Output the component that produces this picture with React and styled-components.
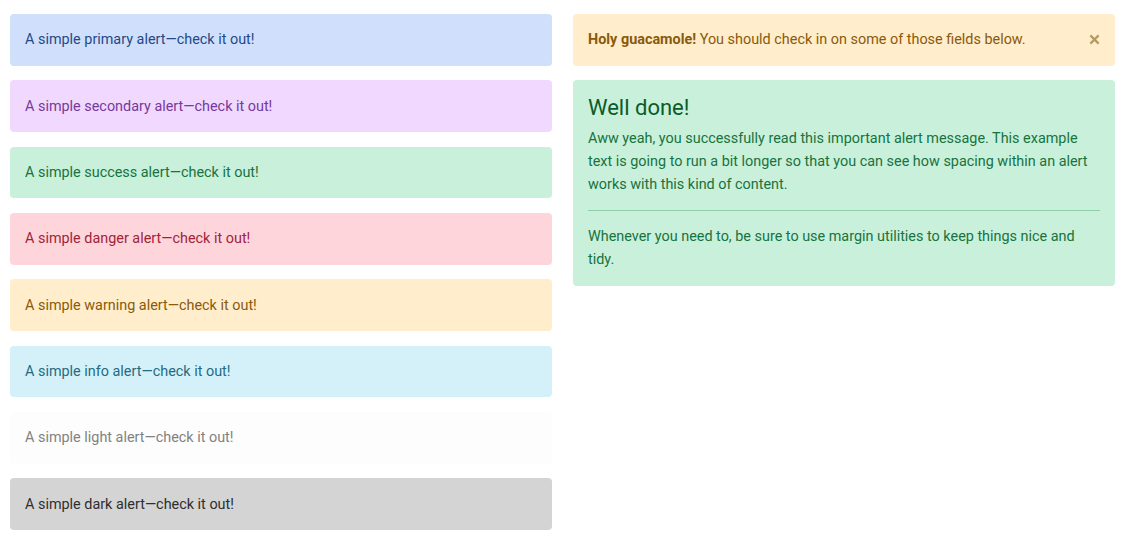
import React from "react";
import styled, { createGlobalStyle } from "styled-components";

const GlobalStyle = createGlobalStyle`
  * { box-sizing: border-box; }
  body {
    margin: 0;
    background: #ffffff;
    font-family: Roboto, "Liberation Sans", sans-serif;
    font-size: 14.4px;
    line-height: 1.6;
  }
`;

const variants = {
  primary: { bg: "#d0e0fc", fg: "#244989" },
  secondary: { bg: "#f0d8ff", fg: "#763a9a" },
  success: { bg: "#c9f0da", fg: "#17733f", hr: "#8fcfa7" },
  danger: { bg: "#ffd5dc", fg: "#a02438" },
  warning: { bg: "#ffedcb", fg: "#8a5a0c" },
  info: { bg: "#d4f1fa", fg: "#236b82" },
  light: { bg: "#fdfdfd", fg: "#828282" },
  dark: { bg: "#d4d4d4", fg: "#2e2e2e" },
};

const Page = styled.div`
  display: grid;
  grid-template-columns: 542px 542px;
  column-gap: 21px;
  padding: 14px 10px;
  align-items: start;
`;

const Column = styled.div`
  display: flex;
  flex-direction: column;
  gap: 14.7px;
`;

const Alert = styled.div`
  position: relative;
  padding: 14.3px 15px;
  padding-right: ${(p) => (p.$dismissible ? "48px" : "15px")};
  border-radius: 4px;
  background: ${(p) => variants[p.$variant].bg};
  color: ${(p) => variants[p.$variant].fg};
`;

const Strong = styled.strong`
  font-weight: 700;
`;

const CloseButton = styled.button`
  position: absolute;
  top: 50%;
  right: 13px;
  transform: translateY(-50%);
  width: 16px;
  height: 16px;
  padding: 0;
  border: 0;
  background: transparent;
  display: flex;
  align-items: center;
  justify-content: center;
  opacity: 0.5;
  cursor: pointer;
`;

const Heading = styled.h4`
  margin: 0 0 6px;
  font-size: 22px;
  font-weight: 400;
  line-height: 1.2;
  color: #0a5c28;
`;

const Paragraph = styled.p`
  margin: 0;
  line-height: 1.6;
`;

const Divider = styled.hr`
  margin: 14px 0;
  border: 0;
  border-top: 1px solid ${(p) => variants[p.$variant].hr};
`;

const simple = ["primary", "secondary", "success", "danger", "warning", "info", "light", "dark"];

export default function App() {
  return (
    <>
      <GlobalStyle />
      <Page>
        <Column>
          {simple.map((v) => (
            <Alert key={v} $variant={v}>
              A simple {v} alert—check it out!
            </Alert>
          ))}
        </Column>
        <Column>
          <Alert $variant="warning" $dismissible>
            <Strong>Holy guacamole!</Strong> You should check in on some of those fields below.
            <CloseButton aria-label="Close">
              <svg width="11" height="11" viewBox="0 0 12 12">
                <path d="M1.5 1.5 L10.5 10.5 M10.5 1.5 L1.5 10.5" stroke="#6b4a00" strokeWidth="2.4" />
              </svg>
            </CloseButton>
          </Alert>
          <Alert $variant="success">
            <Heading>Well done!</Heading>
            <Paragraph>
              Aww yeah, you successfully read this important alert message. This example text is going to run a bit longer so that you can see how spacing within an alert works with this kind of content.
            </Paragraph>
            <Divider $variant="success" />
            <Paragraph>
              Whenever you need to, be sure to use margin utilities to keep things nice and tidy.
            </Paragraph>
          </Alert>
        </Column>
      </Page>
    </>
  );
}
